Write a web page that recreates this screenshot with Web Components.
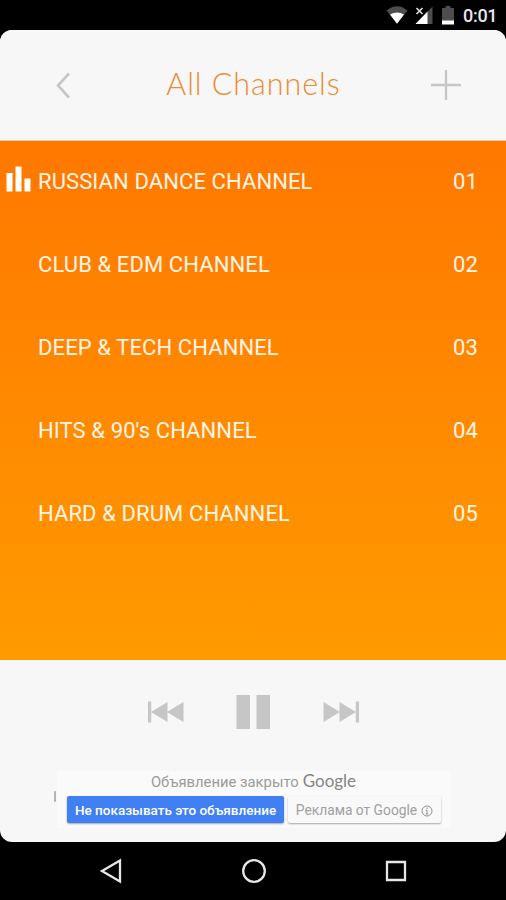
<!DOCTYPE html>
<html lang="ru">
<head>
<meta charset="utf-8">
<title>All Channels</title>
<style>
    html, body {
        margin: 0;
        background: #000;
        font-family: Roboto, "Noto Sans", sans-serif;
    }
</style>
</head>
<body>
<radio-app></radio-app>

<script>
function define (name, html) {
    const template = document.createElement ("template");
    template.innerHTML = html;

    customElements.define (name, class extends HTMLElement {
        constructor () {
            super ();
            this.attachShadow ({mode: "open"});
            this.shadowRoot.appendChild (template.content.cloneNode (true));
        }
    });
}

define ("status-bar", `
<style>
    :host {
        display: flex;
        justify-content: flex-end;
        height: 30px;
        background: #000;
        color: #e8e8e8;
    }

    svg {
        display: block;
        width: 74px;
        height: 30px;
    }

    .time {
        width: 46px;
        padding-left: 3px;
        box-sizing: border-box;
        font-size: 18px;
        font-weight: 500;
        line-height: 32px;
        letter-spacing: -0.3px;
    }
</style>
<svg viewBox="386 0 74 30">
    <path d="M386.5 10.5Q397 2 407.500 10.500L397 23.500Z" fill="#4d4d4d"/>
    <path d="M390 14.500Q397 10.500 404 14.500L397 23.700Z" fill="#fff"/>
    <path d="M432.500 6.500V24H415.500Z" fill="#4d4d4d"/>
    <path d="M427.500 11.500V24H415.500Z" fill="#fff"/>
    <path d="M415 6.500h9v8h-9z" fill="#000"/>
    <path d="M416.500 8l6 6m0-6l-6 6" stroke="#ddd" stroke-width="1.700"/>
    <path d="M442 8h3.500V6h5v2h3.500v13h-12z" fill="#4d4d4d"/>
    <path d="M442 20.500h12v4h-12z" fill="#fff"/>
</svg>
<div class="time">0:01</div>
`);

define ("app-header", `
<style>
    :host {
        display: grid;
        grid-template-columns: 126px 1fr 120px;
        align-items: center;
        justify-items: center;
        height: 111px;
        box-sizing: border-box;
        border-bottom: 1px solid #f2c9a4;
        background: #f7f7f7;
    }

    .title {
        color: #ec8b34;
        font-family: Lato, sans-serif;
        font-size: 30.5px;
        font-weight: 300;
        line-height: 36px;
        letter-spacing: 0.95px;
        white-space: nowrap;
        padding-bottom: 4px;
        margin-left: -5px;
    }

    svg {
        display: block;
        fill: none;
        stroke: #c6c6c6;
        stroke-width: 2.6;
    }
</style>
<svg width="16" height="28" viewBox="0 0 16 28"><path d="M14 2.500L3 14.500L14 26.500"/></svg>
<div class="title"><slot></slot></div>
<svg width="32" height="32" viewBox="0 0 32 32"><path d="M1 16h30M16 1v30" stroke-width="2.300"/></svg>
`);

define ("channel-list", `
<style>
    :host {
        display: flex;
        flex-direction: column;
        height: 519px;
        background: linear-gradient(#ff7800, #ff9a00);
    }
</style>
<slot></slot>
`);

define ("channel-row", `
<style>
    :host {
        display: grid;
        grid-template-columns: 38px 1fr 53px;
        align-items: center;
        height: 83px;
        padding-bottom: 2px;
        box-sizing: border-box;
        color: #fff4e8;
        font-size: 22px;
        line-height: 26px;
        letter-spacing: 0.1px;
        white-space: nowrap;
    }

    svg {
        display: block;
        visibility: hidden;
        margin-left: 6px;
        margin-top: -6px;
    }

    :host([playing]) svg {
        visibility: visible;
    }
</style>
<svg width="25" height="26" viewBox="0 0 25 26" fill="#fff"><path d="M.5 7h6v18.500h-6zM9.500 .5h6v25h-6zM18.500 12.500h6v13h-6z"/></svg>
<span><slot></slot></span>
<span><slot name="number"></slot></span>
`);

define ("player-controls", `
<style>
    :host {
        display: flex;
        align-items: center;
        justify-content: center;
        gap: 52px;
        height: 104px;
        padding-left: 1px;
    }

    svg {
        display: block;
        fill: #c6c6c6;
    }

    svg:last-child {
        margin-left: 1px;
    }
</style>
<svg width="36" height="22" viewBox="0 0 36 22"><path d="M0 .5h3.200v21H0zM3 11L19.500 1v20zM19 11L35.500 1v20z"/></svg>
<svg width="34" height="34" viewBox="0 0 34 34"><path d="M.5 0h13.500v34H.5zM20.500 0H34v34H20.500z"/></svg>
<svg width="36" height="22" viewBox="0 0 36 22"><path d="M36 .5h-3.200v21H36zM33 11L16.500 1v20zM17 11L.5 1v20z"/></svg>
`);

define ("ad-closed", `
<style>
    :host {
        display: grid;
        grid-template-columns: 57px 393px;
        margin-top: 7px;
        height: 57px;
    }

    .edge {
        justify-self: end;
        width: 2px;
        height: 11px;
        margin: 20px 1px 0 0;
        border-radius: 2px;
        background: #b3b3b3;
    }

    .box {
        background: #fafafa;
    }

    .message {
        display: flex;
        justify-content: center;
        align-items: baseline;
        gap: 4px;
        height: 25px;
        color: #9b9b9b;
        font-size: 14.8px;
        line-height: 19px;
    }

    .google {
        color: #858585;
        font-family: Lato, sans-serif;
        font-size: 17px;
        font-weight: 400;
    }

    .buttons {
        display: flex;
        gap: 4px;
        padding-left: 10px;
    }

    .button {
        display: flex;
        align-items: center;
        justify-content: center;
        gap: 4px;
        height: 27px;
        box-sizing: border-box;
        border-radius: 2px;
        font-size: 13.8px;
        white-space: nowrap;
        box-shadow: 0 1px 2px rgba(0, 0, 0, .35);
    }

    .hide {
        width: 217px;
        background: #4080f2;
        color: #fff;
        font-size: 13.5px;
        font-weight: 500;
    }

    .about {
        width: 153px;
        background: #f9f9f9;
        color: #a0a0a0;
    }

    .about svg {
        margin-top: 2px;
    }
</style>
<div class="edge"></div>
<div class="box">
    <div class="message"><span class="closed">Объявление закрыто</span><span class="google">Google</span></div>
    <div class="buttons">
        <div class="button hide">Не показывать это объявление</div>
        <div class="button about"><span>Реклама от Google</span><svg width="12" height="12" viewBox="0 0 12 12" fill="none" stroke="#929292"><circle cx="6" cy="6" r="5"/><path d="M6 5v4M6 2.700v1.300M4.800 5.300H6M4.700 9h2.600"/></svg></div>
    </div>
</div>
`);

define ("nav-bar", `
<style>
    :host {
        display: flex;
        align-items: center;
        justify-content: center;
        gap: 118px;
        height: 58px;
        background: #000;
    }

    svg {
        display: block;
        fill: none;
        stroke: #e6e6e6;
        stroke-width: 2.3;
    }

    svg:last-child {
        margin-left: -1px;
    }
</style>
<svg width="24" height="26" viewBox="0 0 24 26"><path d="M21 2.500v21L3 13z"/></svg>
<svg width="26" height="26" viewBox="0 0 26 26"><circle cx="13" cy="13" r="10.800"/></svg>
<svg width="24" height="24" viewBox="0 0 24 24"><path d="M3 3h18v18H3z"/></svg>
`);

define ("radio-app", `
<style>
    :host {
        display: flex;
        flex-direction: column;
        width: 506px;
        height: 900px;
        overflow: hidden;
    }

    .screen {
        flex: 1;
        background: #f7f7f7;
        border-radius: 12px;
        overflow: hidden;
    }
</style>
<status-bar></status-bar>
<div class="screen">
    <app-header>All Channels</app-header>
    <channel-list>
        <channel-row playing>RUSSIAN DANCE CHANNEL<span slot="number">01</span></channel-row>
        <channel-row>CLUB &amp; EDM CHANNEL<span slot="number">02</span></channel-row>
        <channel-row>DEEP &amp; TECH CHANNEL<span slot="number">03</span></channel-row>
        <channel-row>HITS &amp; 90's CHANNEL<span slot="number">04</span></channel-row>
        <channel-row>HARD &amp; DRUM CHANNEL<span slot="number">05</span></channel-row>
    </channel-list>
    <player-controls></player-controls>
    <ad-closed></ad-closed>
</div>
<nav-bar></nav-bar>
`);
</script>
</body>
</html>
